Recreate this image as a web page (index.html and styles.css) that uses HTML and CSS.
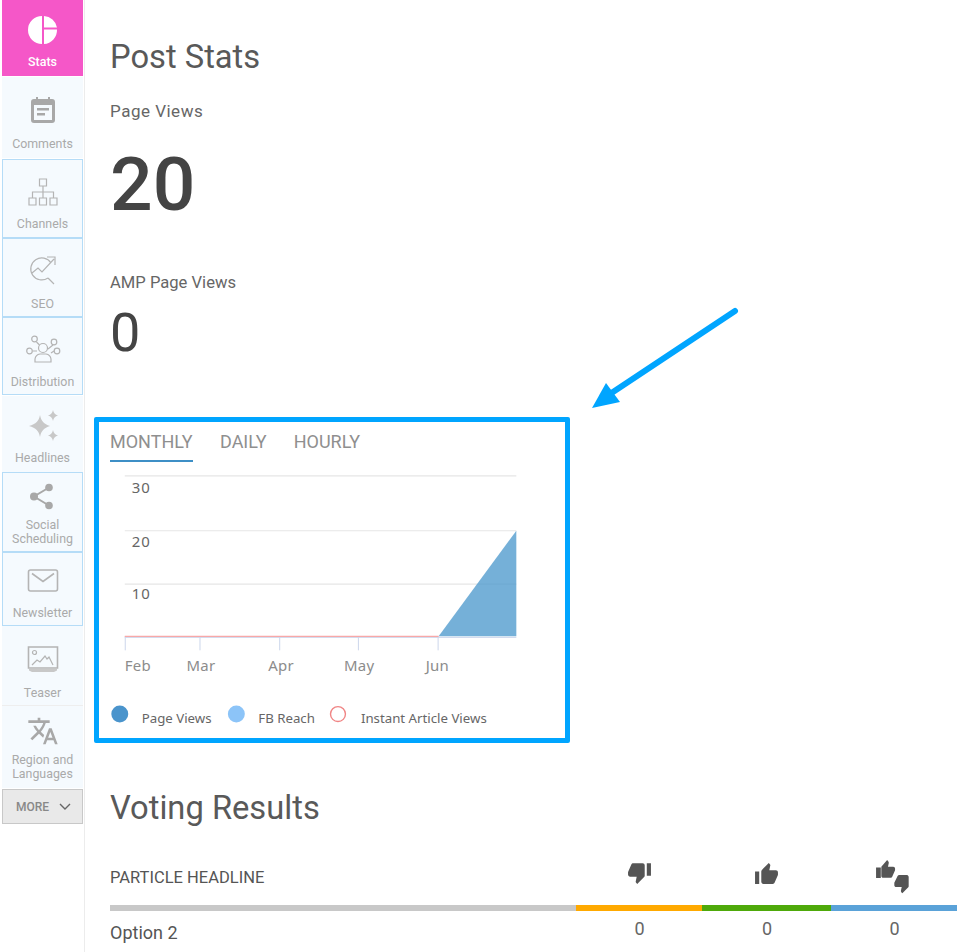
FILE: index.html
```html
<!DOCTYPE html>
<html lang="en">
<head>
<meta charset="utf-8">
<title>Post Stats</title>
<link rel="stylesheet" href="styles.css">
</head>
<body>
<div class="page">
  <nav class="sidebar">
    <a class="nav-item active h-stats">
      <svg class="icon" viewBox="0 0 32 32"><path class="white" d="M15 2a14 14 0 0 0 0 28zM17 2v11.500h13A14 14 0 0 0 17 2zM17 15.500V30a14 14 0 0 0 13-14.500z"/></svg>
      <span>Stats</span>
    </a>
    <a class="nav-item h-comments">
      <svg class="icon" viewBox="0 0 32 32"><path class="fill-dark" d="M9 3h2v2h10V3h2v2h2a3 3 0 0 1 3 3v18a3 3 0 0 1-3 3H7a3 3 0 0 1-3-3V8a3 3 0 0 1 3-3h2zM7 11v15h18V11z"/><path class="fill-dark" d="M10 14h12v2.500H10zM10 19h8v2.500h-8z"/></svg>
      <span>Comments</span>
    </a>
    <a class="nav-item boxed h-channels">
      <svg class="icon" viewBox="0 0 32 32"><path class="line" d="M12.500 3h7v7h-7zM16 10v6M5.500 22v-6h21v6M16 16v6M2 22h7v7H2zM12.500 22h7v7h-7zM23 22h7v7h-7z"/></svg>
      <span>Channels</span>
    </a>
    <a class="nav-item boxed h-seo">
      <svg class="icon" viewBox="0 0 32 32"><path class="line" d="M24 8a11 11 0 1 0-3 15M5 18l6-5 4 4 12-13M20 2h8v8M21 23l6 6"/></svg>
      <span>SEO</span>
    </a>
    <a class="nav-item boxed h-dist">
      <svg class="icon wide" viewBox="0 0 36 32"><circle class="line" cx="18" cy="14" r="4.500"/><path class="line" d="M10 28v-3a6 6 0 0 1 5-5h6a6 6 0 0 1 5 5v3zM11.500 8l3 3M28 11l-5 4M8 17h4M26 19l3-2"/><circle class="line" cx="9.500" cy="5" r="2.800"/><circle class="line" cx="29" cy="8" r="2.800"/><circle class="line" cx="4.500" cy="17" r="2.800"/><circle class="line" cx="32" cy="17" r="2.800"/></svg>
      <span>Distribution</span>
    </a>
    <a class="nav-item h-head">
      <svg class="icon" viewBox="0 0 32 32"><path class="fill-light" d="M13 5c1 6 4 9 10 11-6 2-9 5-10 11-1-6-4-9-11-11 7-2 10-5 11-11zM26 0c.6 3 2 4.500 5 5.500-3 1-4.400 2.500-5 5.500-.6-3-2-4.500-5-5.500 3-1 4.400-2.500 5-5.500zM26 20c.6 3 2 4.500 5 5.500-3 1-4.400 2.500-5 5.500-.6-3-2-4.500-5-5.500 3-1 4.400-2.500 5-5.500z"/></svg>
      <span>Headlines</span>
    </a>
    <a class="nav-item boxed two-line h-social">
      <svg class="icon" viewBox="0 0 32 32"><path class="line-dark" d="M22 6.500 7 15.500l15 9"/><circle class="fill-dark" cx="22" cy="6.500" r="3.800"/><circle class="fill-dark" cx="7" cy="15.500" r="4"/><circle class="fill-dark" cx="22" cy="24.500" r="3.800"/></svg>
      <span>Social<br>Scheduling</span>
    </a>
    <a class="nav-item boxed h-news">
      <svg class="icon" viewBox="0 0 32 32"><rect class="line-thick" x="1.500" y="5" width="29" height="21" rx="2"/><path class="line-thick" d="M5 8.500l11 8 11-8"/></svg>
      <span>Newsletter</span>
    </a>
    <a class="nav-item h-teaser">
      <svg class="icon" viewBox="0 0 32 32"><path class="line-thick" d="M1.500 25V4h29v21z"/><circle class="line" cx="7.500" cy="9.500" r="2"/><path class="line" d="M5 22l5-5 3 2 5-6 2 3 2-2 4 8"/><path class="fill-light" d="M2 26h28v1.500l-3 1.500H5l-3-1.500z"/></svg>
      <span>Teaser</span>
    </a>
    <a class="nav-item two-line h-region">
      <svg class="icon" viewBox="0 0 24 24"><path class="fill-dark" d="M12.870 15.070l-2.540-2.510.03-.03c1.740-1.940 2.980-4.170 3.710-6.530H17V4h-7V2H8v2H1v1.990h11.170C11.500 7.920 10.440 9.750 9 11.350 8.070 10.320 7.300 9.190 6.690 8h-2c.73 1.630 1.730 3.170 2.980 4.560l-5.090 5.020L4 19l5-5 3.110 3.110.76-2.040zM18.500 10h-2L12 22h2l1.120-3h4.750L21 22h2l-4.500-12zm-2.620 7l1.620-4.330L19.120 17h-3.240z"/></svg>
      <span>Region and<br>Languages</span>
    </a>
    <button class="more" type="button">
      <span>MORE</span>
      <svg class="chev" viewBox="0 0 12 8"><path d="M1 1l5 5 5-5"/></svg>
    </button>
  </nav>

  <main class="main">
    <h1 class="title">Post Stats</h1>
    <p class="stat-label first">Page Views</p>
    <p class="stat-big">20</p>
    <p class="stat-label second">AMP Page Views</p>
    <p class="stat-mid">0</p>

    <section class="chart-frame">
      <div class="tabs">
        <span class="tab selected">MONTHLY</span>
        <span class="tab">DAILY</span>
        <span class="tab">HOURLY</span>
      </div>
      <svg class="chart" viewBox="99 463 466 276">
        <g class="grid">
          <path d="M124 476H517M124 531H517M124 584.500H517"/>
        </g>
        <g class="ticks">
          <path d="M124 638H517M124.500 637V651M199.500 637V651M279.500 637V651M358.500 637V651M438.500 637V651"/>
        </g>
        <polygon class="area" points="439,637 517,531 517,637"/>
        <path class="reach" d="M124 637H439"/>
        <g class="ylabels">
          <text x="131" y="493">30</text>
          <text x="131" y="547">20</text>
          <text x="131" y="600">10</text>
        </g>
        <g class="xlabels">
          <text x="124" y="672">Feb</text>
          <text x="186" y="672">Mar</text>
          <text x="268" y="672">Apr</text>
          <text x="344" y="672">May</text>
          <text x="426" y="672">Jun</text>
        </g>
        <circle class="dot-a" cx="119" cy="715" r="8.500"/>
        <circle class="dot-b" cx="236" cy="715" r="8.500"/>
        <circle class="dot-c" cx="338" cy="715" r="7.500"/>
        <g class="legend">
          <text x="141" y="724">Page Views</text>
          <text x="258" y="724">FB Reach</text>
          <text x="361" y="724">Instant Article Views</text>
        </g>
      </svg>
    </section>

    <svg class="arrow" viewBox="0 0 160 120">
      <path class="arrow-line" d="M145 21 20 104"/>
      <polygon class="arrow-head" points="2,118 16,93 30,112"/>
    </svg>

    <h2 class="title voting">Voting Results</h2>
    <div class="votes">
      <div class="vote-head">PARTICLE HEADLINE</div>
      <div class="vote-icon">
        <svg class="thumb thumb-down" viewBox="0 0 24 24"><path d="M15 3H6c-.83 0-1.540.5-1.840 1.220l-3.020 7.050c-.09.230-.14.470-.14.730v2c0 1.100.9 2 2 2h6.310l-.95 4.570-.03.320c0 .41.170.79.440 1.060L9.830 23l6.590-6.590c.36-.36.580-.86.580-1.410V5c0-1.100-.9-2-2-2zm4 0v12h4V3h-4z"/></svg>
      </div>
      <div class="vote-icon">
        <svg class="thumb thumb-up" viewBox="0 0 24 24"><path d="M1 21h4V9H1v12zm22-11c0-1.100-.9-2-2-2h-6.310l.95-4.570.03-.32c0-.41-.17-.79-.44-1.060L14.170 1 7.590 7.590C7.220 7.950 7 8.450 7 9v10c0 1.100.9 2 2 2h9c.83 0 1.540-.5 1.840-1.220l3.020-7.050c.09-.23.140-.47.140-.73v-2z"/></svg>
      </div>
      <div class="vote-icon">
        <svg class="thumb both" viewBox="0 0 36 34"><path d="M1 8h4.500v10H1zM19 9c0-1-.8-1.700-1.700-1.700h-5l.8-3.800-.4-1.200L11.500 1 6.600 6.500c-.4.300-.6.800-.6 1.300V16c0 1 .8 1.800 1.700 1.800h7c.7 0 1.300-.4 1.600-1l2.500-5.700c.1-.2.200-.4.200-.6z"/><path d="M32.500 15h-9.500c-.7 0-1.300.4-1.600 1l-3 6.100c-.1.200-.1.400-.1.600v2c0 1 .8 1.800 1.700 1.800h5.300l-.8 3.800.4 1.200 1 1 5.400-5.500c.4-.3.600-.8.600-1.300V17c0-1-.8-2-1.500-2z"/></svg>
      </div>
      <div class="bar b-grey"></div>
      <div class="bar b-orange"></div>
      <div class="bar b-green"></div>
      <div class="bar b-blue"></div>
      <div class="option">Option 2</div>
      <div class="count">0</div>
      <div class="count">0</div>
      <div class="count">0</div>
    </div>
  </main>
</div>
</body>
</html>
```
FILE: styles.css
```css
* { box-sizing: border-box; }
html, body { margin: 0; height: 952px; overflow: hidden; background: #fff; }
body { font-family: Roboto, "Liberation Sans", sans-serif; color: #555; }
.page { display: flex; height: 952px; }

.sidebar {
  width: 85px;
  flex: none;
  padding: 0 1px 0 2px;
  border-right: 1px solid #ececec;
  display: flex;
  flex-direction: column;
}
.nav-item {
  display: flex;
  flex-direction: column;
  align-items: center;
  justify-content: flex-end;
  gap: 9px;
  padding-bottom: 7px;
  background: #f5fafe;
  color: #aaa;
  font-size: 12.400px;
  line-height: 14px;
  text-align: center;
  flex: none;
}
.nav-item.boxed { border: 1px solid #b5dcf7; padding-bottom: 5px; }
.nav-item.two-line { gap: 5px; }
.nav-item.active { background: #f557c8; color: #fff; font-weight: 500; }
.h-stats { height: 76px; margin-bottom: 1px; }
.h-comments { height: 81px; margin-bottom: 1px; gap: 11px; }
.nav-item.h-channels { height: 79px; padding-bottom: 6px; }
.h-seo { height: 79px; gap: 10px; }
.h-dist { height: 78px; margin-bottom: 1px; }
.h-head { height: 76px; }
.h-social { height: 80px; }
.h-news { height: 74px; }
.nav-item.h-teaser { height: 80px; border-bottom: 1px solid #eee; padding-bottom: 5px; gap: 11px; }
.nav-item.h-region { height: 82px; padding-bottom: 7px; gap: 6px; }

.icon { width: 32px; height: 32px; display: block; }
.icon.wide { width: 36px; }
.white { fill: #fff; }
.fill-dark { fill: #a8a8a8; }
.fill-light { fill: #c8c8c8; }
.line { fill: none; stroke: #b4b4b4; stroke-width: 1.200; }
.line-thick { fill: none; stroke: #b4b4b4; stroke-width: 1.600; }
.line-dark { fill: none; stroke: #a8a8a8; stroke-width: 2; }

.more {
  height: 35px;
  width: 81px;
  margin-top: 1px;
  padding: 0 0 0 2px;
  display: flex;
  align-items: center;
  justify-content: center;
  gap: 10px;
  flex: none;
  background: #e9e9e9;
  border: 1px solid #c8c8c8;
  color: #888;
  font: 500 12px Roboto, sans-serif;
}
.chev { width: 12px; height: 8px; fill: none; stroke: #666; stroke-width: 1.400; }

.main { position: relative; flex: 1; min-width: 0; padding: 38px 23px 0 9px; }
.title { margin: 0 0 0 16px; font-size: 32.700px; line-height: 38px; font-weight: 400; color: #595959; }
.stat-label { margin: 0 0 0 16px; line-height: 20px; color: #666; }
.stat-label.first { margin-top: 25px; font-size: 17px; letter-spacing: .5px; }
.stat-label.second { margin-top: 44px; font-size: 16.600px; }
.stat-big { margin: 18px 0 0 16px; font-size: 75px; line-height: 90px; font-weight: 500; color: #444; }
.stat-mid { margin: 5px 0 0 16px; font-size: 54px; line-height: 70px; color: #444; }

.chart-frame {
  width: 476px;
  height: 326px;
  margin-top: 49px;
  border: 5px solid #00a5ff;
  border-radius: 2px;
}
.tabs { display: flex; gap: 27px; padding: 7px 0 0 11px; height: 41px; }
.tab { font-size: 18px; line-height: 25px; color: #8f8f8f; height: 33px; }
.tab.selected { width: 83px; border-bottom: 2px solid #3d8fc6; }
.chart { display: block; width: 466px; height: 275px; }
.grid path { fill: none; stroke: #e6e6e6; stroke-width: 1.200; }
.ticks path { fill: none; stroke: #ccd6eb; stroke-width: 1; }
.area { fill: #4a97cc; opacity: .76; }
.reach { fill: none; stroke: #f8a8a8; stroke-width: 1.400; }
.ylabels text { font: 15px "Noto Sans", sans-serif; letter-spacing: 1px; fill: #666; }
.xlabels text { font: 15px "Noto Sans", sans-serif; letter-spacing: .3px; fill: #8c8c8c; }
.legend text { font: 13.300px "Noto Sans", sans-serif; fill: #666; }
.dot-a { fill: #4a94cc; }
.dot-b { fill: #8cc4f8; }
.dot-c { fill: #fff; stroke: #f08585; stroke-width: 1.400; }

.arrow { position: absolute; left: 505px; top: 290px; width: 160px; height: 120px; overflow: visible; }
.arrow-line { fill: none; stroke: #00a5ff; stroke-width: 6; stroke-linecap: round; }
.arrow-head { fill: #00a5ff; }

.voting { margin-top: 46px; }
.votes {
  margin: 28px 0 0 16px;
  display: grid;
  grid-template-columns: 466px 126px 129px 126px;
  grid-template-rows: 50px 6px auto;
}
.vote-head { align-self: center; font-size: 16.500px; line-height: 20px; color: #555; margin-bottom: 4px; }
.vote-icon { display: flex; justify-content: center; align-items: center; }
.thumb { width: 25px; height: 25px; fill: #555; display: block; }
.thumb-down { margin-bottom: 16px; }
.thumb-up { margin-bottom: 12px; }
.thumb.both { width: 38px; height: 36px; margin-bottom: 6px; }
.bar { height: 6px; }
.b-grey { background: #c8c8c8; }
.b-orange { background: #ffa900; }
.b-green { background: #4ea90a; }
.b-blue { background: #5aa2d8; }
.option { font-size: 18px; line-height: 20px; padding-top: 12px; color: #555; }
.count { font-size: 18px; line-height: 20px; padding: 8px 0 0 1px; text-align: center; color: #666; }
```
